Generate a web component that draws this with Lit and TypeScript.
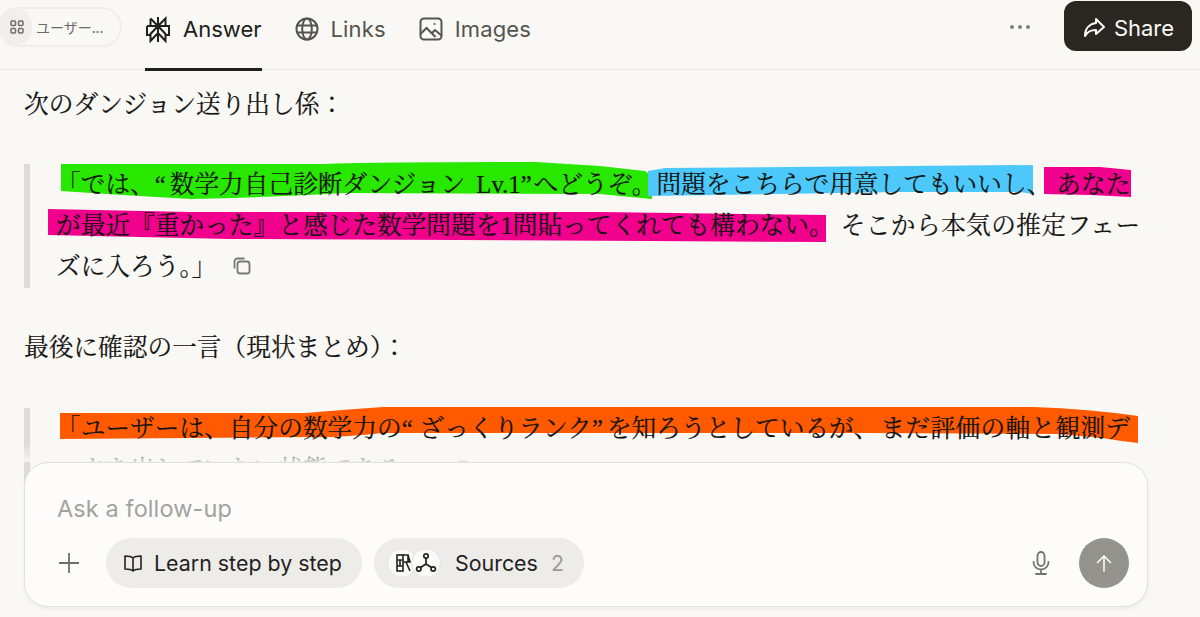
import { LitElement, html, css, svg } from "lit";
import { customElement } from "lit/decorators.js";

const copyIcon = html`<svg class="copy" width="20" height="20" viewBox="0 0 20 20" fill="none" stroke="#777671" stroke-width="1.800"><rect x="5.500" y="5.500" width="12" height="12" rx="2.500"/><path d="M2.500 12.500V5.500a3 3 0 0 1 3-3h7"/></svg>`;

@customElement("app-root")
export class AppRoot extends LitElement {
  static styles = css`
    :host { display: block; width: 1200px; height: 617px; overflow: hidden; position: relative; background: #faf8f5; font-family: "Inter", "Noto Sans CJK JP", sans-serif; color: #20201c; }
    * { box-sizing: border-box; }
    header { height: 70px; border-bottom: 1px solid #e9e7e3; display: flex; align-items: flex-start; position: relative; }
    .crumb { margin: 7px 0 0 -2px; width: 124px; height: 40px; border: 2px solid #f0eeea; border-radius: 20px; display: flex; align-items: center; font-size: 14px; color: #6b6a65; font-family: "Noto Sans CJK JP", sans-serif; }
    .crumb .ic { width: 32px; height: 36px; border-radius: 18px; background: #f1efeb; display: flex; align-items: center; justify-content: center; margin-right: 4px; padding-left: 2px; }
    .tabs { display: flex; margin-left: 23px; height: 70px; gap: 32px; }
    .tab { display: flex; align-items: center; gap: 11px; height: 70px; padding-bottom: 12px; font-size: 22px; color: #55544f; position: relative; letter-spacing: .15px; }
    .tab.on { color: #20201c; gap: 12px; letter-spacing: 0; }
    .tab.on::after { content: ""; position: absolute; left: 0; right: 0; bottom: -1px; height: 3px; background: #20201c; }
    .spacer { flex: 1; }
    .dots { margin: 19px 34px 0 0; height: 16px; display: flex; gap: 3.5px; align-items: center; }
    .dots i { width: 4.5px; height: 4.5px; border-radius: 50%; background: #7d7c77; }
    .share { margin: 1px 8px 0 0; width: 128px; height: 50px; padding-top: 4px; border-radius: 12px; background: #2a2720; color: #fbfaf7; font-size: 22px; display: flex; align-items: center; justify-content: center; gap: 8px; }
    .share svg { margin-top: -2px; }
    main { padding: 20px 0 0 24px; font-family: "Liberation Serif", "Noto Serif CJK JP", serif; font-size: 24.7px; line-height: 41px; color: #141412; -webkit-text-stroke: .2px #141412; }
    p { margin: 0; height: 30px; line-height: 30px; }
    blockquote { margin: 0; border-left: 6px solid #dedcd8; position: relative; padding-left: 26px; width: 1118px; height: 124px; white-space: nowrap; }
    .q1 { margin-top: 44px; margin-bottom: 45px; }
    .q2 { margin-top: 45px; height: 90px; }
    blockquote svg.hl { position: absolute; left: -30px; top: 0; width: 1200px; height: 130px; overflow: visible; }
    blockquote span.t { position: relative; display: block; }
    .o4 { letter-spacing: 4px; } .o7 { letter-spacing: 7px; } .c2 { letter-spacing: 2px; } .c4 { letter-spacing: 4px; }
    .g5 { margin-left: 5px; } .g7 { margin-left: 7px; } .g2 { margin-left: 2px; }
    .lv { margin-left: 5px; }
    .wide { letter-spacing: .4px; } .wide2 { letter-spacing: .3px; }
    .copy { display: inline-block; vertical-align: -1px; margin-left: 16px; }
    .fade { position: absolute; left: 0; right: 0; top: 444px; height: 18px; background: linear-gradient(rgba(250,248,245,0), rgba(250,248,245,.85)); }
    .composer { position: absolute; left: 24px; top: 462px; width: 1124px; height: 145px; background: #fdfcfa; border: 1px solid #e3e1dd; border-radius: 24px; box-shadow: 0 2px 4px rgba(0,0,0,.05); padding: 31px 18px 0 32px; }
    .ph { font-size: 23.5px; line-height: 30px; color: #a3a29e; letter-spacing: .1px; }
    .row { display: flex; align-items: center; margin-top: 14px; height: 50px; }
    .plus { width: 24px; margin-right: 25px; display: flex; }
    .chip { height: 50px; border-radius: 25px; background: #eeece9; display: flex; align-items: center; font-size: 21.4px; color: #23221f; }
    .chip.learn { width: 256px; padding-left: 17px; gap: 11px; }
    .chip.src { width: 210px; margin-left: 12px; padding-left: 13px; }
    .chip .n { color: #9c9b97; margin-left: 13px; }
    .bub { width: 30px; height: 30px; border-radius: 50%; background: #fbfaf8; border: 1px solid #e5e3df; display: flex; align-items: center; justify-content: center; position: relative; }
    .bub.a { justify-content: flex-end; padding-right: 4px; }
    .bub + .bub { margin-left: -6px; margin-right: 14px; }
    .mic { margin-left: auto; margin-right: 28px; display: flex; }
    .send { width: 50px; height: 50px; border-radius: 50%; background: #93928d; display: flex; align-items: center; justify-content: center; }
  `;

  render() {
    return html`
      <header>
        <div class="crumb">
          <div class="ic"><svg width="16" height="16" viewBox="0 0 16 16" fill="none" stroke="#6f6e69" stroke-width="1.5"><rect x="2" y="2" width="4.5" height="4.5" rx="1"/><rect x="9.500" y="2" width="4.5" height="4.5" rx="1"/><rect x="2" y="9.500" width="4.5" height="4.5" rx="1"/><rect x="9.500" y="9.500" width="4.5" height="4.5" rx="1"/></svg></div>
          <span>ユーザー...</span>
        </div>
        <div class="tabs">
          <div class="tab on">
            <svg width="26" height="27" viewBox="0 0 26 27" fill="none" stroke="#20201c" stroke-width="2"><path d="M13 1v25M5.500 2.500L13 10l7.500-7.500V10M5.500 2.500V10M2 10h22v9h-3.500M2 10v9h3.500M13 10l-7.500 8v7l7.500-8 7.500 8v-7z"/></svg>
            Answer
          </div>
          <div class="tab">
            <svg width="26" height="26" viewBox="0 0 26 26" fill="none" stroke="#55544f" stroke-width="2"><circle cx="13" cy="13" r="10.500"/><ellipse cx="13" cy="13" rx="4.800" ry="10.500"/><path d="M2.500 9.500h21M2.500 16.500h21"/></svg>
            Links
          </div>
          <div class="tab">
            <svg width="26" height="26" viewBox="0 0 26 26" fill="none" stroke="#55544f" stroke-width="2"><rect x="2.500" y="2.500" width="21" height="21" rx="3.500"/><path d="M2.500 18l6-6 9 9M14 17l3-3 6.500 5.500"/><circle cx="16.500" cy="8" r="1" fill="#55544f" stroke="none"/></svg>
            Images
          </div>
        </div>
        <div class="spacer"></div>
        <div class="dots"><i></i><i></i><i></i></div>
        <div class="share">
          <svg width="24" height="24" viewBox="0 0 24 24" fill="none" stroke="#fbfaf7" stroke-width="2" stroke-linejoin="round" stroke-linecap="round"><path d="M14 4l8 8-8 7v-4c-5 0-8 1-11 6 0-7 4-12 11-13z"/></svg>
          Share
        </div>
      </header>
      <main>
        <p>次のダンジョン送り出し係：</p>
        <blockquote class="q1">
          <svg class="hl" viewBox="0 0 1200 130">
            ${svg`<path fill="#29e800" d="M61 0 L325 0 Q360 -2 536 -2 L600 2 L645 7 L652 12 L652 35 L630 33 L600 30 L345 29 Q280 33 191 35 Q120 31 61 27Z"/>
            <path fill="#4cc9fa" d="M648 7 L665 4 L1033 1 L1033 30 L1020 28 L900 28 L648 32Z"/>
            <path fill="#f0008c" d="M1044 3 L1100 3 L1131 6 L1131 33 L1090 31 L1044 30Z"/>
            <path fill="#f0008c" d="M48 45 L190 48 L600 48 L826 51 L826 78 L650 77 L230 75 L48 71Z"/>`}
          </svg>
          <span class="t">「では、<span class="o4">“</span>数学力自己診断ダンジョン <span class="lv">Lv.1</span><span class="c2">”</span>へどうぞ。<span>問題をこちらで用意してもいいし、</span><span class="g5">あなた</span><br>が最近『重かった』と感じた数学問題を1問貼ってくれても構わない。<span class="g7 wide">そこから本気の推定フェー</span><br>ズに入ろう。」${copyIcon}</span>
        </blockquote>
        <p>最後に確認の一言（現状まとめ）：</p>
        <blockquote class="q2">
          <svg class="hl" viewBox="0 0 1200 130">
            ${svg`<path fill="#ff5a00" d="M60 5 L306 5 Q340 2 383 -1 L1033 -1 Q1090 1 1138 8 L1138 35 Q1120 33 1102 30 L1060 26 L868 25 L383 25 Q340 30 306 29 L60 31Z"/>`}
          </svg>
          <span class="t">「ユーザーは、自分の数学力の<span class="o7">“</span>ざっくりランク<span class="c4">”</span>を知ろうとしているが、<span class="g2 wide2">まだ評価の軸と観測デ</span><br>ータを出していない状態である。」${copyIcon}</span>
        </blockquote>
      </main>
      <div class="fade"></div>
      <div class="composer">
        <div class="ph">Ask a follow-up</div>
        <div class="row">
          <div class="plus"><svg width="24" height="24" viewBox="0 0 24 24" stroke="#6f6e69" stroke-width="1.800"><path d="M12 2v20M2 12h20"/></svg></div>
          <div class="chip learn">
            <svg width="20" height="20" viewBox="0 0 20 20" fill="none" stroke="#23221f" stroke-width="1.600" stroke-linejoin="round"><path d="M10 5c-1.500-1.500-4-2-8-2v13c4 0 6.500.5 8 2 1.500-1.500 4-2 8-2V3c-4 0-6.500.5-8 2zM10 5v13"/></svg>
            Learn step by step
          </div>
          <div class="chip src">
            <div class="bub a"><svg width="16" height="20" viewBox="0 0 16 20" fill="none" stroke="#23221f" stroke-width="1.600"><rect x="1" y="2" width="6" height="16"/><path d="M1 7h6M1 13h6M4 7v6"/><path d="M7 2h5v7H7M12 2l2 7h-2M10 9l4 9"/></svg></div>
            <div class="bub"><svg width="22" height="22" viewBox="0 0 22 22" fill="none" stroke="#23221f" stroke-width="1.700"><circle cx="11" cy="4" r="2.200"/><circle cx="3.800" cy="17" r="2.200"/><circle cx="18.200" cy="17" r="2.200"/><path d="M11 6.200V12M11 12l-5.500 3.500M11 12l5.500 3.500"/></svg></div>
            Sources <span class="n">2</span>
          </div>
          <div class="mic"><svg width="20" height="26" viewBox="0 0 20 26" fill="none" stroke="#73726d" stroke-width="1.800" stroke-linecap="round"><rect x="6.500" y="2" width="7" height="14" rx="3.500"/><path d="M2.500 12a7.500 7.500 0 0 0 15 0M10 20v4M5 24h10"/></svg></div>
          <div class="send"><svg width="20" height="20" viewBox="0 0 20 20" fill="none" stroke="#fbfaf7" stroke-width="1.600" stroke-linecap="round" stroke-linejoin="round"><path d="M10 18V3M3.500 9.500L10 3l6.500 6.500"/></svg></div>
        </div>
      </div>
    `;
  }
}
